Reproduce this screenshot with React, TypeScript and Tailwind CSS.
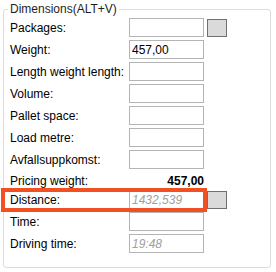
import React from 'react';

type Row = { label: string; value?: string; hint?: string; button?: boolean };

const rowsTop: Row[] = [
  { label: 'Packages:', button: true },
  { label: 'Weight:', value: '457,00' },
  { label: 'Length weight length:' },
  { label: 'Volume:' },
  { label: 'Pallet space:' },
  { label: 'Load metre:' },
  { label: 'Avfallsuppkomst:' },
];

const rowsBottom: Row[] = [
  { label: 'Time:' },
  { label: 'Driving time:', hint: '19:48' },
];

const FieldRow: React.FC<{ row: Row }> = ({ row }) => (
  <div className="flex items-center h-[19px]">
    <span className="w-[119px] shrink-0 whitespace-nowrap text-black">{row.label}</span>
    <div className="w-[75px] h-[19px] border border-[#b4b4b4] bg-white px-[2px] flex items-center">
      {row.value && <span className="text-black">{row.value}</span>}
      {row.hint && <span className="italic text-[#a0a0a0]">{row.hint}</span>}
    </div>
    {row.button && (
      <div className="ml-[3px] w-[20px] h-[18px] border border-[#707070] bg-[#dadada]" />
    )}
  </div>
);

export default function App() {
  return (
    <div
      className="w-[276px] h-[272px] bg-white pt-[1px] pl-[3px] text-[12px] leading-[16px]"
      style={{ fontFamily: '"Liberation Sans", Arial, sans-serif' }}
    >
      <fieldset className="relative w-[268px] h-[267px] border border-[#dcdcdc] rounded-[3px] pl-[6px] pt-[1px]">
        <legend className="ml-[-2px] px-[2px] text-[#1e1e1e]">Dimensions(ALT+V)</legend>
        <div className="flex flex-col gap-[3px]">
          {rowsTop.map((r) => (
            <FieldRow key={r.label} row={r} />
          ))}
        </div>
        <div className="flex items-center h-[18px] mt-[3px]">
          <span className="w-[119px] shrink-0 text-black">Pricing weight:</span>
          <span className="w-[75px] text-right font-bold text-black">457,00</span>
        </div>
        <div className="relative flex flex-col gap-[3px]">
          <div className="relative">
            <FieldRow row={{ label: 'Distance:', hint: '1432,539', button: true }} />
            <div className="absolute left-[-9px] top-[-2px] w-[206px] h-[24px] border-[4px] border-[#f25022]" />
          </div>
          {rowsBottom.map((r) => (
            <FieldRow key={r.label} row={r} />
          ))}
        </div>
      </fieldset>
    </div>
  );
}
